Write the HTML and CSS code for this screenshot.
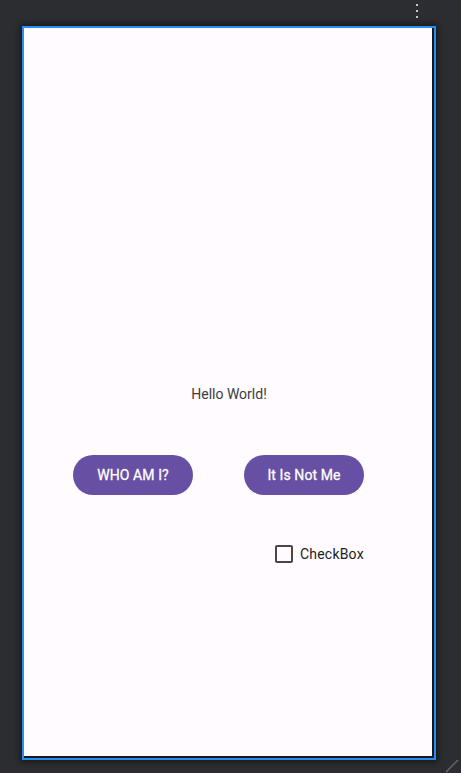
FILE: index.html
```html
<!DOCTYPE html>
<html>
<head>
<meta charset="utf-8">
<link rel="stylesheet" href="styles.css">
</head>
<body>
<div class="ide">
  <div class="toolbar">
    <div class="kebab"><span></span><span></span><span></span></div>
  </div>
  <div class="screen">
    <div class="content">
      <div class="hello">Hello World!</div>
      <div class="buttons">
        <button class="btn">WHO AM I?</button>
        <button class="btn">It Is Not Me</button>
      </div>
      <label class="check">
        <span class="box"></span>
        <span class="check-label">CheckBox</span>
      </label>
    </div>
  </div>
  <svg class="resize" width="16" height="16" viewBox="0 0 16 16">
    <line x1="1" y1="15" x2="13" y2="3" stroke="#6c6f75" stroke-width="1.2"/>
  </svg>
</div>
</body>
</html>
```
FILE: styles.css
```css
html, body {
  margin: 0;
  padding: 0;
  background: #2b2d30;
  font-family: Roboto, "Noto Sans", sans-serif;
}
.ide {
  position: relative;
  width: 461px;
  height: 773px;
  overflow: hidden;
}
.toolbar {
  height: 26px;
  display: flex;
  justify-content: flex-end;
  padding-right: 43px;
}
.kebab {
  display: flex;
  flex-direction: column;
  gap: 4px;
  padding-top: 4px;
}
.kebab span {
  display: block;
  width: 2px;
  height: 2px;
  background: #c4c6ca;
}
.screen {
  margin-left: 22px;
  width: 410px;
  height: 730px;
  background: #fffbfe;
  border: 2px solid #2a8cf7;
  box-shadow: inset -2px -2px 0 #16181c, 0 0 6px 2px rgba(0,0,0,0.45);
}
.content {
  display: flex;
  flex-direction: column;
  padding-top: 356px;
}
.hello {
  text-align: center;
  font-size: 14px;
  line-height: 20px;
  color: #3d3b40;
}
.buttons {
  display: flex;
  gap: 51px;
  padding-left: 49px;
  margin-top: 51px;
}
.btn {
  width: 120px;
  height: 40px;
  border: none;
  border-radius: 20px;
  background: #6750a4;
  color: #ffffff;
  font-family: Roboto, sans-serif;
  font-weight: 400;
  -webkit-text-stroke: 0.3px #ffffff;
  font-size: 14px;
  letter-spacing: 0.1px;
  padding: 0;
}
.check {
  display: flex;
  align-items: center;
  padding-left: 251px;
  margin-top: 49px;
  height: 20px;
}
.box {
  width: 14px;
  height: 14px;
  border: 2px solid #49454f;
  border-radius: 2px;
}
.check-label {
  margin-left: 7px;
  font-size: 14px;
  color: #1c1b1f;
  letter-spacing: 0.2px;
}
.resize {
  position: absolute;
  right: 0;
  bottom: 0;
}
```
